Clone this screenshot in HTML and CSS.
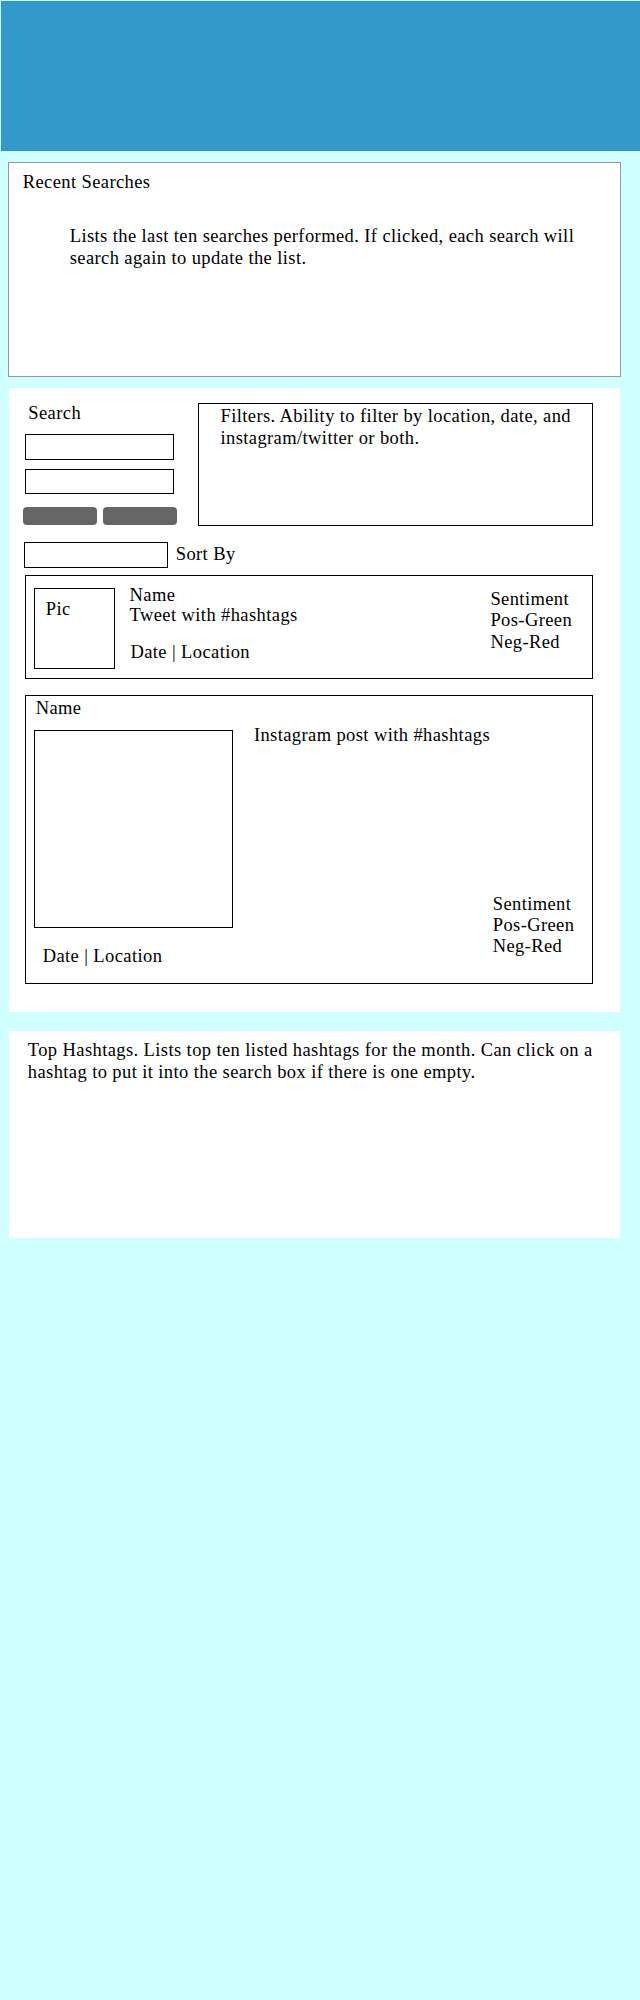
FILE: index.html
```html
<!DOCTYPE html>
<html>
<head>
<meta charset="utf-8">
<title>Social Search Mockup</title>
<link rel="stylesheet" href="styles.css">
</head>
<body>
<header class="banner"></header>

<section class="recent">
  <h2 class="recent-title">Recent Searches</h2>
  <p class="recent-desc">Lists the last ten searches performed. If clicked, each search will<br>search again to update the list.</p>
</section>

<main class="panel search-panel">
  <div class="top-row">
    <div class="search-col">
      <div class="search-label">Search</div>
      <div class="input-box first"></div>
      <div class="input-box second"></div>
      <div class="btn-row">
        <div class="btn"></div>
        <div class="btn"></div>
      </div>
    </div>
    <div class="filters">
      <p class="filters-text">Filters. Ability to filter by location, date, and<br>instagram/twitter or both.</p>
    </div>
  </div>

  <div class="sort-row">
    <div class="sort-box"></div>
    <span class="sort-label">Sort By</span>
  </div>

  <article class="tweet-card">
    <div class="tweet-pic">Pic</div>
    <div class="tweet-main">
      <div class="tweet-line">Name</div>
      <div class="tweet-line">Tweet with #hashtags</div>
      <div class="tweet-date">Date | Location</div>
    </div>
    <div class="sentiment tweet-sent">
      <div>Sentiment</div>
      <div>Pos-Green</div>
      <div>Neg-Red</div>
    </div>
  </article>

  <article class="ig-card">
    <div class="ig-name">Name</div>
    <div class="ig-pic"></div>
    <div class="ig-text">Instagram post with #hashtags</div>
    <div class="sentiment ig-sent">
      <div>Sentiment</div>
      <div>Pos-Green</div>
      <div>Neg-Red</div>
    </div>
    <div class="ig-date">Date | Location</div>
  </article>
</main>

<section class="panel hashtags">
  <p class="hashtags-text">Top Hashtags. Lists top ten listed hashtags for the month. Can click on a<br>hashtag to put it into the search box if there is one empty.</p>
</section>
</body>
</html>
```

FILE: styles.css
```css
* {
  box-sizing: border-box;
}

html, body {
  margin: 0;
  padding: 0;
}

body {
  background: #cfffff;
  color: #000;
  font-family: "Liberation Serif", "Times New Roman", serif;
  font-size: 18.5px;
  line-height: 21.7px;
  letter-spacing: 0.4px;
  min-height: 2000px;
}

p, h2 {
  margin: 0;
  font-weight: normal;
  font-size: inherit;
}

.banner {
  display: block;
  margin: 1px 0 0 1px;
  height: 150px;
  background: #3399cc;
}

.recent {
  margin: 11px 0 0 8px;
  width: 613px;
  height: 215px;
  background: #fff;
  border: 1px solid #999;
  padding: 8.5px 0 0 13.7px;
}

.recent-desc {
  margin: 33px 0 0 47px;
}

.panel {
  display: block;
  margin-left: 9px;
  width: 611px;
  background: #fff;
}

.search-panel {
  margin-top: 10.6px;
  padding: 15px 27px 27.7px 14px;
}

.top-row {
  display: flex;
  align-items: flex-start;
}

.search-col {
  width: 153.7px;
  display: flex;
  flex-direction: column;
}

.search-label {
  margin: 0.6px 0 0 5.3px;
}

.input-box {
  width: 149px;
  height: 26px;
  margin-left: 2px;
  border: 1px solid #000;
}

.input-box.first {
  margin-top: 9.4px;
}

.input-box.second {
  margin-top: 8.3px;
  height: 25.4px;
}

.btn-row {
  display: flex;
  gap: 6.3px;
  margin-top: 12.7px;
}

.btn {
  width: 73.7px;
  height: 18px;
  background: #666;
  border-radius: 4px;
}

.filters {
  margin-left: 21.6px;
  width: 394.4px;
  height: 123px;
  border: 1px solid #000;
  padding: 2.9px 0 0 21.2px;
}

.sort-row {
  display: flex;
  align-items: center;
  margin: 16px 0 0 1px;
}

.sort-box {
  width: 143.7px;
  height: 26px;
  border: 1px solid #000;
}

.sort-label {
  margin-left: 8px;
}

.tweet-card {
  display: flex;
  align-items: flex-start;
  margin: 7px 0 0 1.5px;
  width: 568.2px;
  height: 104px;
  border: 1px solid #000;
}

.tweet-pic {
  width: 81px;
  height: 81px;
  margin: 12px 0 0 8.8px;
  border: 1px solid #000;
  padding: 10.6px 0 0 10.4px;
}

.tweet-main {
  width: 360.8px;
  margin: 9.3px 0 0 14.3px;
}

.tweet-line {
  line-height: 20.6px;
}

.tweet-date {
  margin: 16.4px 0 0 0.8px;
}

.sentiment {
  line-height: 21.2px;
}

.tweet-sent {
  margin-top: 13.6px;
}

.ig-card {
  display: grid;
  grid-template-columns: 198.4px 1fr;
  grid-template-rows: auto auto auto;
  margin: 16px 0 0 1.5px;
  width: 568.2px;
  height: 289.7px;
  border: 1px solid #000;
  padding: 2.6px 0 0 8.8px;
  align-content: start;
}

.ig-name {
  grid-column: 1 / -1;
  grid-row: 1;
  margin-left: 1.4px;
}

.ig-pic {
  grid-column: 1;
  grid-row: 2;
  height: 198px;
  margin-top: 9.7px;
  border: 1px solid #000;
}

.ig-text {
  grid-column: 2;
  grid-row: 2;
  align-self: start;
  margin: 5px 0 0 21.2px;
}

.ig-sent {
  grid-column: 2;
  grid-row: 2 / 4;
  align-self: end;
  margin: 0 0 10.8px 260px;
}

.ig-date {
  grid-column: 1;
  grid-row: 3;
  margin: 18.9px 0 0 8.4px;
}

.hashtags {
  margin-top: 19.3px;
  height: 206.7px;
  padding: 9.2px 0 0 18.8px;
}
```
